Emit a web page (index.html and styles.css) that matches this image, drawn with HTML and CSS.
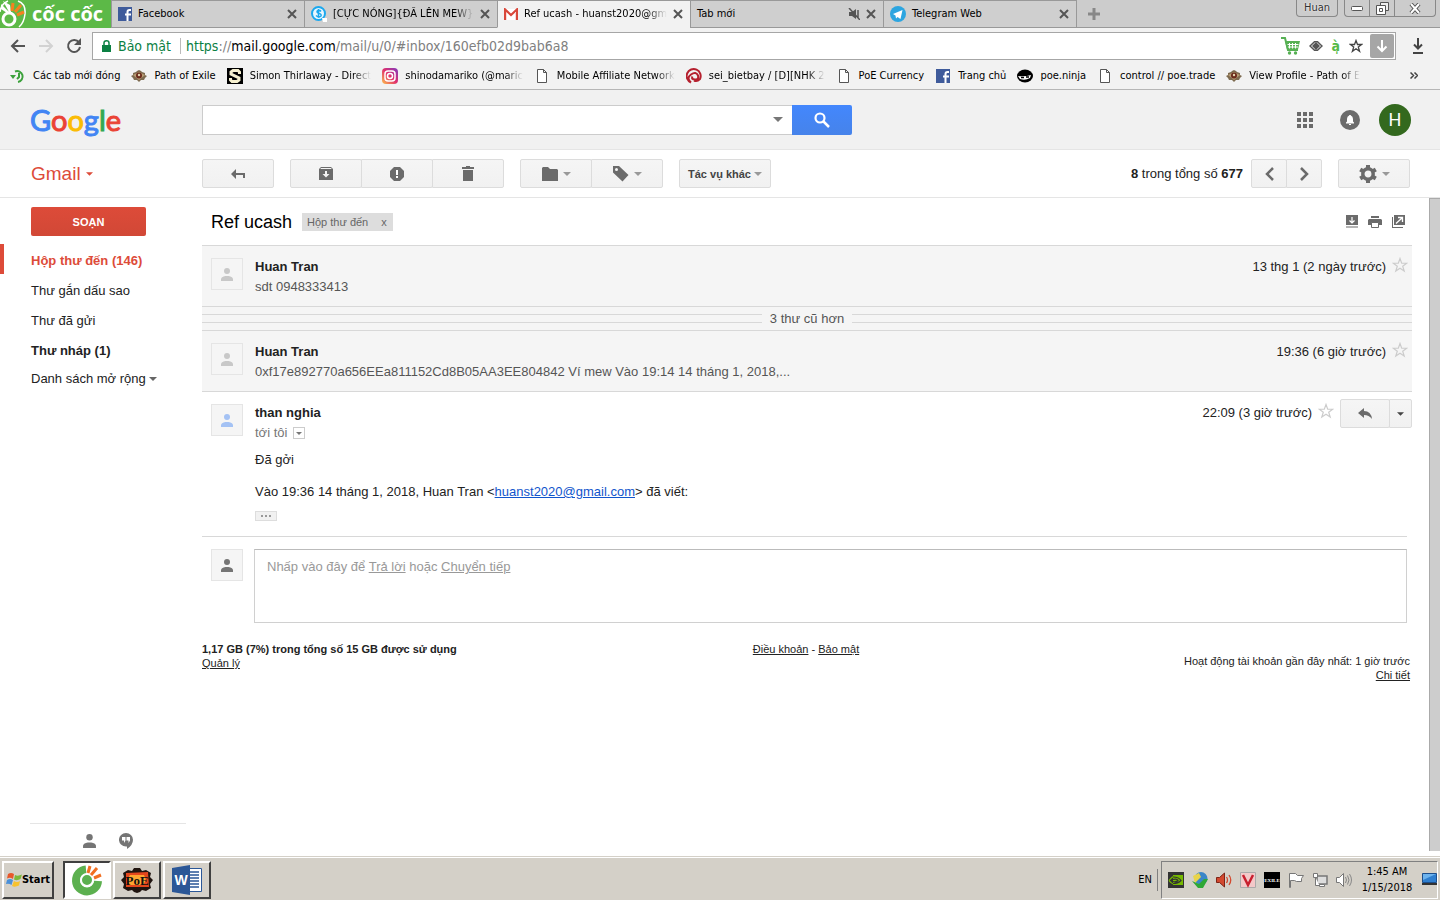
FILE: index.html
```
<!DOCTYPE html>
<html lang="vi">

<head>
    <meta charset="UTF-8">
    <meta name="viewport" content="width=device-width,initial-scale=1.0">
    <title>Ref ucash - huanst2020@gmail.com - Gmail</title>
    <link rel="stylesheet" href="styles.css">
</head>
<body>
    <!-- shared icons -->
    <svg class="defs" width="0" height="0">
        <symbol id="close" viewBox="0 0 10 10"><path d="M1 1l8 8M9 1l-8 8" stroke="#555" stroke-width="2"/></symbol>
        <symbol id="fb" viewBox="0 0 14 14"><path fill="#3f5b9b" d="M0 0h14v14H0z"/><path fill="none" stroke="#fff" stroke-width="2" d="M13 3h-1.500q-2 0-2 2V14M7 7.500h6"/></symbol>
        <symbol id="page" viewBox="0 0 12 14"><path fill="#fff" stroke="#555" d="M1.500.5h6l3 3v10h-9zM7.500.5v3h3"/></symbol>
        <symbol id="poe" viewBox="0 0 16 12"><path fill="#7d6a4f" d="M0 6l2-1 0-2 3-1 1-1 2-1 2 1 1 1 3 1 0 2 2 1-2 2-1 2-3 0-2 2-2-2-3 0-1-2z"/><path fill="#b89c74" d="M2 5l6-3 6 3-6 5z"/><circle cx="8" cy="5.500" r="3" fill="#6b2b1c"/><circle cx="8" cy="5" r="1.200" fill="#e4d4b0"/></symbol>
        <symbol id="down" viewBox="0 0 8 4"><path fill="currentColor" d="M0 0h8L4 4z"/></symbol>
        <symbol id="person" viewBox="0 0 12 13"><circle cx="6" cy="3" r="3" fill="currentColor"/><path fill="currentColor" d="M0 13v-2.500C1 8.500 4 8 6 8s5 .5 6 2.500V13z"/></symbol>
        <symbol id="star" viewBox="0 0 16 16"><path fill="none" stroke="currentColor" stroke-width="1.200" d="M8 1.500l1.700 4.600 5 .1-4 3 1.500 4.900L8 11.200l-4.200 2.900 1.500-4.900-4-3 5-.1z"/></symbol>
    </svg>

    <header class="browser">
        <div class="tabstrip">
            <div class="brand">
                <svg width="26" height="28" viewBox="0 0 26 28"><path fill="none" stroke="#fff" stroke-width="1.500" d="M18 1q8 3 7 13-1 9-6 13M0 12Q1 4 8 1"/><circle cx="9" cy="19" r="6" fill="none" stroke="#fff" stroke-width="3"/><path fill="#fff" d="M1 4l8 8-2 1-6-4zM3 1l7 4 1 7-2 0z"/><path stroke="#f58220" stroke-width="3" d="M13 3l-1 8M24 12l-7 3"/><path stroke="#f58220" stroke-width="3" d="M21 5l-6 7"/></svg>
                <span>cốc cốc</span>
            </div>
            <div class="tab"><svg class="fav" width="14" height="14"><use href="#fb"/></svg><span class="tab-title">Facebook</span><button class="x" aria-label="Đóng"><svg width="10" height="10"><use href="#close"/></svg></button></div>
            <div class="tab">
                <svg class="fav" width="16" height="16" viewBox="0 0 16 16"><circle cx="7.500" cy="7.500" r="6.500" fill="#e8f7ff" stroke="#1ba8ee" stroke-width="2"/><path fill="none" stroke="#1ba8ee" stroke-width="1.500" d="M10 5.500q-1-1.500-3-1-2 1 0 2.500 4 1 3 3-2 2-5-.5M7.500 3v9"/><path fill="#fff" d="M11 12h5v4h-4z"/></svg>
                <span class="tab-title fade">[CỰC NÓNG]{ĐÃ LÊN MEW}</span><button class="x" aria-label="Đóng"><svg width="10" height="10"><use href="#close"/></svg></button>
            </div>
            <div class="tab active">
                <svg class="fav" width="14" height="12" viewBox="0 0 14 12"><path fill="#fff" d="M1 1h12v11H1z"/><path fill="none" stroke="#d9483b" stroke-width="2.200" d="M1.100 12V1.500L7 7l5.900-5.500V12"/></svg>
                <span class="tab-title fade">Ref ucash - huanst2020@gm</span><button class="x" aria-label="Đóng"><svg width="10" height="10"><use href="#close"/></svg></button>
            </div>
            <div class="tab">
                <span class="tab-title">Tab mới</span>
                <svg width="12" height="12" viewBox="0 0 12 12"><path fill="#555" d="M1 4h3l4-3v10L4 8H1z"/><path d="M10 2v8M1 0l11 12" stroke="#555" stroke-width="1.500"/></svg>
                <button class="x" aria-label="Đóng"><svg width="10" height="10"><use href="#close"/></svg></button>
            </div>
            <div class="tab">
                <svg class="fav" width="16" height="16" viewBox="0 0 16 16"><circle cx="8" cy="8" r="8" fill="#2ca5e0"/><path fill="#fff" d="M3 8l9.500-4-2 9-3-2-1.500 1.500-.5-3z"/></svg>
                <span class="tab-title">Telegram Web</span><button class="x" aria-label="Đóng"><svg width="10" height="10"><use href="#close"/></svg></button>
            </div>
            <button class="newtab" aria-label="Tab mới"><svg width="14" height="14" viewBox="0 0 14 14"><path d="M7 1v12M1 7h12" stroke="#888" stroke-width="3"/></svg></button>
            <div class="window-buttons">
                <button class="user">Huan</button>
                <div class="win-group">
                    <button aria-label="Thu nhỏ"><svg width="12" height="5" viewBox="0 0 12 5"><rect x=".5" y=".5" width="11" height="4" rx="1" fill="#fff" stroke="#555"/></svg></button>
                    <button aria-label="Khôi phục"><svg width="13" height="13" viewBox="0 0 13 13"><path fill="#eee" stroke="#555" d="M4.500.5h8v8h-8z"/><path fill="#fff" stroke="#555" d="M.5 3.500h9v9h-9zM3.500 6.500h3v3h-3z"/></svg></button>
                    <button class="win-close" aria-label="Đóng cửa sổ"><svg width="12" height="11" viewBox="0 0 12 11"><path d="M2 1l8 9M10 1L2 10" stroke="#555" stroke-width="4"/><path d="M2 1l8 9M10 1L2 10" stroke="#fff" stroke-width="2"/></svg></button>
                </div>
            </div>
        </div>

        <div class="navbar">
            <button aria-label="Quay lại"><svg width="16" height="14" viewBox="0 0 16 14"><path fill="none" stroke="#555" stroke-width="2" d="M15 7H2M8 1L2 7l6 6"/></svg></button>
            <button aria-label="Tiến"><svg width="16" height="14" viewBox="0 0 16 14"><path fill="none" stroke="#d2d2d2" stroke-width="2" d="M1 7h13M8 1l6 6-6 6"/></svg></button>
            <button aria-label="Tải lại"><svg width="16" height="16" viewBox="0 0 16 16"><path fill="none" stroke="#555" stroke-width="2" d="M13 4.500A6 6 0 1 0 14 9"/><path fill="#555" d="M15 0v7H8z"/></svg></button>
            <div class="omnibox">
                <svg width="9" height="12" viewBox="0 0 9 12"><path fill="#0b8043" d="M0 5h9v7H0z"/><path fill="none" stroke="#0b8043" stroke-width="1.500" d="M2 5V3q0-2.200 2.500-2.200T7 3v2"/></svg>
                <span class="secure">Bảo mật</span>
                <span class="url"><span class="scheme">https</span>://<b>mail.google.com</b>/mail/u/0/#inbox/160efb02d9bab6a8</span>
                <div class="page-actions">
                    <svg width="19" height="18" viewBox="0 0 19 18"><path fill="none" stroke="#56b053" stroke-width="2" d="M0 1h4l3 12h10"/><path fill="#56b053" d="M4 4h15l-2 8.500H6z"/><path stroke="#fff" d="M8.500 6v5.500M11.500 6v5.500M14.500 6v5.500M6.500 7.500h11M7 10h10"/><circle cx="8.500" cy="16" r="1.700" fill="#56b053"/><circle cx="14.500" cy="16" r="1.700" fill="#56b053"/></svg>
                    <svg width="14" height="10" viewBox="0 0 14 10"><path fill="none" stroke="#555" stroke-width="1.500" d="M1 5l4.500-4.200h3L13 5 8.500 9.200h-3z"/><path fill="#555" d="M7 1l4 4-4 4-4-4z"/></svg>
                    <span class="spell">à̩</span>
                    <svg width="14" height="14" viewBox="0 0 14 14"><path fill="none" stroke="#444" stroke-width="1.300" d="M7 1.500l1.500 4h4.200L9.300 8l1.300 4.300L7 9.800l-3.600 2.500L4.700 8 1.300 5.500h4.200z"/></svg>
                </div>
                <button class="save" aria-label="Tải xuống"><svg width="12" height="14" viewBox="0 0 12 14"><path fill="none" stroke="#fff" stroke-width="2" d="M6 1v11M1.500 7.500L6 12l4.500-4.500"/></svg></button>
            </div>
            <button class="downloads" aria-label="Tệp đã tải"><svg width="12" height="16" viewBox="0 0 12 16"><path fill="none" stroke="#444" stroke-width="2" d="M6 0v10M2 6.500l4 4 4-4M1 15h10"/></svg></button>
        </div>

        <nav class="bookmarks">
            <a href="#"><svg width="16" height="14" viewBox="0 0 16 14"><path fill="none" stroke="#3ba13b" stroke-width="2" d="M5 2.500A5.500 5.500 0 1 1 8 13M9 4v4l-2 2"/><path fill="#3ba13b" d="M0 6h6L3 10z"/></svg><span>Các tab mới đóng</span></a>
            <a href="#"><svg width="16" height="12"><use href="#poe"/></svg><span>Path of Exile</span></a>
            <a href="#"><svg width="16" height="16" viewBox="0 0 16 16"><path d="M0 0h16v16H0z"/><path fill="none" stroke="#f6f0cf" stroke-width="3" d="M12.500 6V4L11 2.500H6L4 4v2l8 4v2l-2 1.500H5L3.500 12v-2"/></svg><span class="fade">Simon Thirlaway - Direct</span></a>
            <a href="#"><svg width="16" height="16" viewBox="0 0 16 16"><defs><linearGradient id="insta" x1="0" y1="1" x2="1" y2="0"><stop offset="0" stop-color="#fdc14b"/><stop offset=".5" stop-color="#e1306c"/><stop offset="1" stop-color="#7d3ac1"/></linearGradient></defs><rect width="16" height="16" rx="4" fill="url(#insta)"/><rect x="3" y="3" width="10" height="10" rx="3" fill="none" stroke="#fff" stroke-width="1.500"/><circle cx="8" cy="8" r="2.500" fill="none" stroke="#fff" stroke-width="1.500"/></svg><span class="fade">shinodamariko (@maric</span></a>
            <a href="#"><svg width="16" height="14"><use href="#page"/></svg><span class="fade">Mobile Affiliate Network</span></a>
            <a href="#"><svg width="16" height="16" viewBox="0 0 16 16"><path fill="none" stroke="#b5202e" stroke-width="2" d="M5 14.500A7 7 0 1 1 14 11q-3 3-6 1.500M5 14.500Q0 10 5 6.500t7 1q1 4-3 4t-2.500-3"/></svg><span class="fade">sei_bietbay / [D][NHK 2</span></a>
            <a href="#"><svg width="16" height="14"><use href="#page"/></svg><span>PoE Currency</span></a>
            <a href="#"><svg width="16" height="14"><use href="#fb"/></svg><span>Trang chủ</span></a>
            <a href="#"><svg width="16" height="14" viewBox="0 0 16 14"><ellipse cx="8" cy="7" rx="8" ry="6.500"/><path fill="#fff" d="M1 7q7 1 13-1l-1 3q-5 3-10 1z"/><path d="M4 8.500h3M9 8h3" stroke="#000" stroke-width="1.500"/></svg><span>poe.ninja</span></a>
            <a href="#"><svg width="16" height="14"><use href="#page"/></svg><span>control // poe.trade</span></a>
            <a href="#"><svg width="16" height="12"><use href="#poe"/></svg><span class="fade">View Profile - Path of E</span></a>
            <button class="more" aria-label="Thêm"><svg width="8" height="7" viewBox="0 0 8 7"><path fill="none" stroke="#444" stroke-width="1.500" d="M.5.5l3 3-3 3M4.500.5l3 3-3 3"/></svg></button>
        </nav>
    </header>

    <div class="gbar">
        <a class="logo" href="#" aria-label="Google"><span class="c-blue">G</span><span class="c-red">o</span><span class="c-yellow">o</span><span class="c-blue">g</span><span class="c-green">l</span><span class="c-red">e</span></a>
        <form class="search" action="">
            <input type="text" aria-label="Tìm kiếm" autocomplete="off">
            <button type="button" class="options" aria-label="Tùy chọn tìm kiếm"><svg width="10" height="5"><use href="#down"/></svg></button>
            <button class="go" aria-label="Tìm"><svg width="16" height="16" viewBox="0 0 16 16"><circle cx="6" cy="6" r="4.500" fill="none" stroke="#fff" stroke-width="2.200"/><path d="M9 9l6 6" stroke="#fff" stroke-width="2.500"/></svg></button>
        </form>
        <div class="account">
            <button aria-label="Ứng dụng"><svg width="16" height="16" viewBox="0 0 16 16"><path fill="#6b6b6b" d="M0 0h4v4H0zM6 0h4v4H6zM12 0h4v4h-4zM0 6h4v4H0zM6 6h4v4H6zM12 6h4v4h-4zM0 12h4v4H0zM6 12h4v4H6zM12 12h4v4h-4z"/></svg></button>
            <button aria-label="Thông báo"><svg width="20" height="20" viewBox="0 0 20 20"><circle cx="10" cy="10" r="10" fill="#6b6b6b"/><path fill="#fff" d="M6 13.500v-1l1-1V9q0-3 2.200-3.500V5h1.600v.5Q13 6 13 9v2.500l1 1v1zM9 14h2v1H9z"/></svg></button>
            <button class="me">H</button>
        </div>
    </div>

    <div class="toolbar">
        <button class="gmail">Gmail <svg width="7" height="4"><use href="#down"/></svg></button>
        <div class="group">
            <button class="btn" aria-label="Quay lại"><svg width="14" height="10" viewBox="0 0 14 10"><path fill="#6b6b6b" d="M0 5l5-5v4h9v5h-2V6H5v4z"/></svg></button>
        </div>
        <div class="group">
            <button class="btn" aria-label="Lưu trữ"><svg width="14" height="13" viewBox="0 0 14 13"><path fill="#6b6b6b" fill-rule="evenodd" d="M2 0h10l2 2v11H0V2zM2 1l-.7 1h11.400L12 1zM6 4v3H3.500L7 10.500 10.500 7H8V4z"/></svg></button>
            <button class="btn" aria-label="Báo cáo spam"><svg width="14" height="14" viewBox="0 0 14 14"><path fill="#6b6b6b" d="M4 0h6l4 4v6l-4 4H4l-4-4V4z"/><path fill="#fff" d="M6 3h2v5H6zM6 9h2v2H6z"/></svg></button>
            <button class="btn" aria-label="Xóa"><svg width="12" height="15" viewBox="0 0 12 15"><path fill="#6b6b6b" d="M0 1h4V0h4v1h4v2H0zM1 4h10v11H1z"/></svg></button>
        </div>
        <div class="group">
            <button class="btn" aria-label="Chuyển tới"><svg width="16" height="14" viewBox="0 0 16 14"><path fill="#6b6b6b" d="M0 1l1-1h5l2 2h7l1 1v11H0z"/></svg><svg class="caret" width="8" height="4"><use href="#down"/></svg></button>
            <button class="btn" aria-label="Nhãn"><svg width="16" height="16" viewBox="0 0 16 16"><path fill="#6b6b6b" fill-rule="evenodd" d="M0 0h6l9.500 9-6 6.500L0 6.500zM2 3.500a1.500 1.500 0 1 0 3 0 1.500 1.500 0 1 0-3 0"/></svg><svg class="caret" width="8" height="4"><use href="#down"/></svg></button>
        </div>
        <button class="btn other">Tác vụ khác<svg class="caret" width="8" height="4"><use href="#down"/></svg></button>
        <div class="count"><b>8</b> trong tổng số <b>677</b></div>
        <div class="group pager">
            <button class="btn" aria-label="Mới hơn"><svg width="9" height="14" viewBox="0 0 9 14"><path fill="none" stroke="#6b6b6b" stroke-width="2.500" d="M8 1L2 7l6 6"/></svg></button>
            <button class="btn" aria-label="Cũ hơn"><svg width="9" height="14" viewBox="0 0 9 14"><path fill="none" stroke="#6b6b6b" stroke-width="2.500" d="M1 1l6 6-6 6"/></svg></button>
        </div>
        <button class="btn" aria-label="Cài đặt"><svg width="18" height="18" viewBox="0 0 18 18"><circle cx="9" cy="9" r="5.200" fill="none" stroke="#6b6b6b" stroke-width="3.500"/><path stroke="#6b6b6b" stroke-width="4" d="M9 0v4M9 14v4M1.200 4.500l3.500 2M13.300 11.500l3.500 2M1.200 13.500l3.500-2M13.300 6.500l3.500-2"/></svg><svg class="caret" width="8" height="4"><use href="#down"/></svg></button>
    </div>

    <div class="page">
        <aside>
            <button class="compose">SOẠN</button>
            <ul class="labels">
                <li class="current"><a href="#">Hộp thư đến (146)</a></li>
                <li><a href="#">Thư gắn dấu sao</a></li>
                <li><a href="#">Thư đã gửi</a></li>
                <li class="unread"><a href="#">Thư nháp (1)</a></li>
                <li class="expand"><a href="#">Danh sách mở rộng</a><svg width="8" height="4"><use href="#down"/></svg></li>
            </ul>
            <div class="chat">
                <button aria-label="Danh bạ"><svg width="13" height="14"><use href="#person"/></svg></button>
                <button aria-label="Hangouts"><svg width="14" height="16" viewBox="0 0 14 16"><path fill="#757575" d="M7 0a7 6.700 0 0 1 7 6.700Q14 12 8 16v-2.500H7A7 6.700 0 0 1 7 0z"/><path fill="#fff" d="M3 4h3.500v3.500L5 10V7.500H3zM7.500 4H11v3.500L9.500 10V7.500h-2z"/></svg></button>
            </div>
        </aside>

        <main>
            <div class="subject">
                <h1>Ref ucash</h1>
                <span class="chip">Hộp thư đến <button aria-label="Xóa nhãn">x</button></span>
                <div class="tools">
                    <button aria-label="Lưu"><svg width="12" height="13" viewBox="0 0 12 13"><path fill="#6b6b6b" d="M0 0h12v10H0zM0 11.500h12v1H0z"/><path fill="none" stroke="#fff" stroke-width="1.200" d="M6 2v6M3.500 5.500L6 8l2.500-2.500"/></svg></button>
                    <button aria-label="In"><svg width="14" height="12" viewBox="0 0 14 12"><path fill="#6b6b6b" d="M3 0h8v2H3zM1 3h12l1 1v5h-3V7H3v2H0V4z"/><path fill="#fff" stroke="#6b6b6b" d="M3.500 6.500h7v5h-7z"/></svg></button>
                    <button aria-label="Mở cửa sổ mới"><svg width="13" height="13" viewBox="0 0 13 13"><path fill="#6b6b6b" d="M2 0h11v10H2zM0 2h1v10h10v1H0z"/><path fill="none" stroke="#fff" stroke-width="1.300" d="M4 8.500L10 3M6 2.500h4.500V7"/></svg></button>
                </div>
            </div>

            <section class="msg folded">
                <div class="avatar"><svg width="12" height="13"><use href="#person"/></svg></div>
                <div class="text"><b>Huan Tran</b><p class="snippet">sdt 0948333413</p></div>
                <div class="date">13 thg 1 (2 ngày trước) <svg width="16" height="16"><use href="#star"/></svg></div>
            </section>
            <button class="older"><span>3 thư cũ hơn</span></button>
            <section class="msg folded">
                <div class="avatar"><svg width="12" height="13"><use href="#person"/></svg></div>
                <div class="text"><b>Huan Tran</b><p class="snippet">0xf17e892770a656EEa811152Cd8B05AA3EE804842 Ví mew Vào 19:14 14 tháng 1, 2018,...</p></div>
                <div class="date">19:36 (6 giờ trước) <svg width="16" height="16"><use href="#star"/></svg></div>
            </section>
            <section class="msg open">
                <div class="avatar blue"><svg width="12" height="13"><use href="#person"/></svg></div>
                <div class="text">
                    <b>than nghia</b>
                    <p class="to">tới tôi <button aria-label="Chi tiết"><svg width="6" height="3"><use href="#down"/></svg></button></p>
                    <div class="body">
                        <p>Đã gởi</p>
                        <p>Vào 19:36 14 tháng 1, 2018, Huan Tran &lt;<a href="#">huanst2020@gmail.com</a>&gt; đã viết:</p>
                        <button class="trimmed" aria-label="Hiển thị nội dung bị cắt"><svg width="10" height="2" viewBox="0 0 10 2"><path fill="#999" d="M0 0h2v2H0zM4 0h2v2H4zM8 0h2v2H8z"/></svg></button>
                    </div>
                </div>
                <div class="date">22:09 (3 giờ trước) <svg width="16" height="16"><use href="#star"/></svg></div>
                <div class="group reply-btns">
                    <button class="btn" aria-label="Trả lời"><svg width="14" height="11" viewBox="0 0 14 11"><path fill="#6b6b6b" d="M0 5l6-5v3q7 0 8 8-3-4-8-4v3z"/></svg></button>
                    <button class="btn" aria-label="Khác"><svg width="7" height="4"><use href="#down"/></svg></button>
                </div>
            </section>

            <section class="reply">
                <div class="avatar dark"><svg width="12" height="13"><use href="#person"/></svg></div>
                <div class="reply-box">Nhấp vào đây để <a href="#">Trả lời</a> hoặc <a href="#">Chuyển tiếp</a></div>
            </section>

            <footer>
                <div><b>1,17 GB (7%) trong tổng số 15 GB được sử dụng</b><br><a href="#">Quản lý</a></div>
                <div class="terms"><a href="#">Điều khoản</a> - <a href="#">Bảo mật</a></div>
                <div class="activity">Hoạt động tài khoản gần đây nhất: 1 giờ trước<br><a href="#">Chi tiết</a></div>
            </footer>
        </main>
        <div class="scrollbar"></div>
    </div>

    <div class="taskbar">
        <button class="task start"><svg width="16" height="15" viewBox="0 0 16 15"><path fill="#e8572a" d="M2 2q3-2 6 0L7 7Q4 5 1 6.500z"/><path fill="#7cb83b" d="M9 3q3 1.500 7-.5L14.500 7Q11 9 8 7.500z"/><path fill="#4a90d9" d="M1 8q3-2 6 0l-1.500 5Q3 11 0 12z"/><path fill="#f7c22d" d="M8 9q3 2 6 0l-1 4.500q-4 2-7 .5z"/></svg>Start</button>
        <button class="task pressed" aria-label="Cốc Cốc"><svg width="32" height="32" viewBox="0 0 32 32"><path fill="none" stroke="#5cb04f" stroke-width="8" d="M15 5.500A11 11 0 1 0 27 17"/><circle cx="16" cy="16" r="6" fill="#5cb04f" stroke="#fff" stroke-width="2"/><path stroke="#f26f21" stroke-width="3" d="M19 2l-2 7M26 4l-6 7M30 11l-7 3"/></svg></button>
        <button class="task" aria-label="Path of Exile"><svg width="32" height="26" viewBox="0 0 32 26"><path fill="#20140f" d="M0 13l3-3-1-4 5-3 4 1 2-3h6l2 3 4-1 5 3-1 4 3 3-3 4 1 4-5 3-4-1-2 2-3 1-3-1-2-2-4 1-5-3 1-4z"/><path fill="#e4471d" d="M5 6l22-1 1 15-23 0z"/><path fill="#ffa630" d="M9 8h14l2 5-3 5H9l-3-5z"/><text x="16" y="18" text-anchor="middle" class="poe-text">PoE</text></svg></button>
        <button class="task" aria-label="Word"><svg width="32" height="32" viewBox="0 0 32 32"><path fill="#fff" stroke="#2b5797" d="M15.500 4.500h15v23h-15z"/><path stroke="#2b5797" stroke-width="1.500" d="M18 8h10M18 11h10M18 14h10M18 17h10M18 20h10M18 23h10"/><path fill="#2b5797" d="M1 4l18-3v30L1 28z"/><text x="10" y="21" text-anchor="middle" class="word-text">W</text></svg></button>
        <span class="lang">EN</span>
        <div class="tray">
            <svg width="16" height="16" viewBox="0 0 16 16"><path fill="#333" d="M0 0h16v16H0z"/><path fill="#76b900" d="M5 3h10v10H5z"/><path fill="none" stroke="#76b900" stroke-width="1.200" d="M1 8.500q4-5 6-4M1 8.500q3 4 6 3.500"/><path fill="none" stroke="#333" stroke-width="1.200" d="M5 5q6 0 8 3.500-3 3-8 3M5 7.500q4-1 5 1-2 2-5 1"/></svg>
            <svg width="16" height="16" viewBox="0 0 16 16"><circle cx="9" cy="6.500" r="6.500" fill="#3a86c8"/><path fill="#e9d44a" d="M1 4l6-3 2 4-6 6z"/><path fill="#2ea836" d="M0 9l7 3 5-5h4l-5 9H6z"/></svg>
            <svg width="16" height="16" viewBox="0 0 16 16"><path fill="#d3492f" stroke="#7d2417" d="M.5 5.500h3l5-4.500v14l-5-4.500h-3z"/><path fill="none" stroke="#d3492f" stroke-width="1.300" d="M10.500 5q2 3 0 6M13 3q3.500 5 0 10"/></svg>
            <svg width="16" height="16" viewBox="0 0 16 16"><path fill="#f3c9c9" stroke="#aaa" d="M.5.5h15v15H.5z"/><path fill="none" stroke="#c8202f" stroke-width="2.500" d="M3 3l5 10 5-10"/></svg>
            <svg width="16" height="16" viewBox="0 0 16 16"><path d="M0 0h16v16H0z"/><text x="8" y="10" text-anchor="middle" class="exile-text">EXILE</text></svg>
            <svg width="16" height="16" viewBox="0 0 16 16"><path fill="#fff" stroke="#777" d="M1.500 15.500V1.500h6l2 2h6l-2 3 0 3h-5l-2-1h-4v7z"/></svg>
            <svg width="16" height="16" viewBox="0 0 16 16"><path fill="#ddd" stroke="#777" stroke-width="1.500" d="M5 4h10v8H5z"/><path fill="#fff" stroke="#777" d="M7.500 12.500h5v2h-5zM1.500 1.500h4v4h-4zM3.500 5.500v8h4"/></svg>
            <svg width="16" height="16" viewBox="0 0 16 16"><path fill="#fff" stroke="#777" d="M.5 5.500h3l4-4v13l-4-4h-3z"/><path fill="none" stroke="#888" d="M9.500 5q2 3 0 6M11.500 3.500q3 4.500 0 9M13.500 2q4 6 0 12"/></svg>
            <div class="clock">1:45 AM<br>1/15/2018</div>
            <svg width="15" height="13" viewBox="0 0 15 13"><path fill="#2f7fd0" stroke="#1d4f8c" d="M.5.5h14v9H.5z"/><path fill="#6db3ee" d="M1 1h13L1 7z"/><path fill="#333" d="M0 10h15v2H0z"/></svg>
        </div>
    </div>
</body>
</html>
```
FILE: styles.css
```
* { box-sizing: border-box; }
body { margin: 0; min-height: 100vh; display: flex; flex-direction: column; font: 13px/20px "Liberation Sans", Arial, sans-serif; color: #222; background: #fff; }
button { font: inherit; color: inherit; background: none; border: none; padding: 0; display: flex; align-items: center; justify-content: center; }
svg { flex: none; display: block; }
p, h1, ul { margin: 0; padding: 0; }
.defs { position: absolute; }

/* browser window */
.browser { background: #f2f2f2; border-bottom: 1px solid #b6b6b6; font: 11px/16px "DejaVu Sans Condensed", "Liberation Sans", sans-serif; color: #000; }
.tabstrip { display: flex; height: 28px; background: #ccc; box-shadow: inset 0 -1px #999; }
.brand { width: 111px; flex: none; display: flex; align-items: center; gap: 6px; background: #5cb947; color: #fff; font: bold 20px/28px "Open Sans", sans-serif; white-space: nowrap; }
.tab { flex: 0 1 193px; min-width: 0; display: flex; align-items: center; padding: 0 7px 0 6px; gap: 6px; background: #cfcfcf; border: solid #999; border-width: 1px 0 1px 1px; }
.tab.active { background: #f2f2f2; border-bottom-color: #f2f2f2; }
.tab-title { flex: 1; white-space: nowrap; }
.tab-title.fade { -webkit-mask-image: linear-gradient(to left, transparent, #000 20px); mask-image: linear-gradient(to left, transparent, #000 20px); }
.newtab { padding: 0 10px; border-left: 1px solid #999; }
.window-buttons { margin-left: auto; padding-right: 4px; display: flex; align-items: flex-start; gap: 6px; }
.window-buttons button { height: 17px; border: 1px solid #888; border-top: none; }
.user { width: 42px; border-radius: 0 0 4px 4px; color: #333; text-shadow: 0 0 2px #fff; }
.win-group { display: flex; }
.win-group button { width: 25px; border-right: none; }
.win-group button:first-child { border-radius: 0 0 0 4px; }
.win-group .win-close { width: 42px; border-right: 1px solid #888; border-radius: 0 0 4px 0; }

.navbar { display: flex; align-items: center; gap: 12px; padding: 4px 16px 2px 10px; }
.omnibox { flex: 1; min-width: 0; height: 28px; margin-left: -2px; padding: 0 1px 0 9px; display: flex; align-items: center; gap: 7px; background: #fff; border: 1px solid #a6a6a6; font-size: 14px; }
.secure { color: #0b8043; padding-right: 9px; border-right: 1px solid #bbb; }
.url { flex: 1; white-space: nowrap; color: #808080; margin-left: -2px; }
.url b { font-weight: normal; color: #000; }
.url .scheme { color: #0b8043; }
.page-actions { display: flex; align-items: center; gap: 9px; }
.spell { color: #56b947; font-weight: bold; }
.save { width: 24px; height: 24px; background: #a6a6a6; border-radius: 2px; }
.downloads { margin-left: 4px; }

.bookmarks { display: flex; align-items: center; gap: 11px; height: 27px; padding: 0 22px 0 10px; }
.bookmarks a { display: flex; align-items: center; gap: 7px; color: #000; text-decoration: none; white-space: nowrap; }
.bookmarks .fade { -webkit-mask-image: linear-gradient(to left, transparent, #000 18px); mask-image: linear-gradient(to left, transparent, #000 18px); }
.more { margin-left: auto; }

/* google bar */
.gbar { display: flex; align-items: center; height: 60px; padding: 0 29px 0 30px; background: #f1f1f1; border-bottom: 1px solid #e5e5e5; }
.logo { width: 172px; font: 29px/44px Lato, sans-serif; text-decoration: none; -webkit-text-stroke: 1px; }
.c-blue { color: #4285f4; }
.c-red { color: #ea4335; }
.c-yellow { color: #fbbc05; }
.c-green { color: #34a853; }
.search { flex: 0 1 650px; height: 30px; display: flex; }
.search input { flex: 1; min-width: 0; border: 1px solid #ccc; border-right: none; background: #fff; padding: 0 8px; font: inherit; }
.search .options { width: 28px; background: #fff; border: solid #ccc; border-width: 1px 0; color: #777; }
.search .go { width: 60px; background: linear-gradient(#4387fd, #4683ea); border-radius: 0 2px 2px 0; }
.account { margin-left: auto; display: flex; align-items: center; gap: 27px; }
.me { width: 32px; height: 32px; margin-left: -8px; border-radius: 50%; background: #33691e; color: #fff; font: 18px/32px Roboto, sans-serif; }

/* gmail toolbar */
.toolbar { display: flex; align-items: center; gap: 16px; height: 48px; padding: 0 30px; border-bottom: 1px solid #e5e5e5; }
.gmail { width: 156px; justify-content: flex-start; gap: 5px; padding-left: 1px; color: #dd4b39; font-size: 19px; }
.group { display: flex; }
.btn { width: 72px; height: 29px; gap: 5px; background: linear-gradient(#f5f5f5, #f1f1f1); border: 1px solid #dcdcdc; border-radius: 2px; color: #444; }
.group .btn + .btn { margin-left: -1px; border-radius: 0 2px 2px 0; }
.caret { color: #999; }
.other { width: 92px; gap: 3px; font-size: 11px; font-weight: bold; white-space: nowrap; }
.count { margin: 0 -8px 0 auto; }
.pager .btn { width: 36px; }

/* sidebar */
.page { flex: 1; display: flex; }
aside { width: 202px; flex: none; display: flex; flex-direction: column; padding-top: 9px; }
.compose { width: 115px; height: 29px; margin: 0 0 8px 31px; border-radius: 2px; background: linear-gradient(#dd4b39, #d14836); color: #fff; font-size: 11px; font-weight: bold; }
.labels { list-style: none; }
.labels li { height: 30px; display: flex; align-items: center; padding: 4px 0 0 31px; color: #222; }
.labels a { color: inherit; text-decoration: none; }
.labels .current { border-left: 4px solid #dd4b39; padding-left: 27px; color: #dd4b39; font-weight: bold; }
.labels .unread { font-weight: bold; }
.labels .expand { height: 26px; gap: 3px; }
.labels .expand svg { color: #666; }
.chat { margin: auto 16px 0 30px; height: 33px; padding-top: 2px; display: flex; justify-content: center; gap: 23px; border-top: 1px solid #e5e5e5; color: #757575; }

/* conversation */
main { flex: 1; min-width: 0; padding-right: 17px; }
.subject { display: flex; align-items: center; height: 47px; padding: 0 7px 0 9px; }
h1 { font-size: 18px; font-weight: normal; color: #000; }
.chip { display: flex; align-items: center; gap: 13px; height: 18px; margin-left: 10px; padding: 0 6px 0 5px; background: #ddd; color: #666; font-size: 11px; }
.tools { margin-left: auto; display: flex; align-items: center; gap: 10px; }
.msg { display: flex; padding: 11px 0 9px; }
.folded { background: #f5f5f5; border: solid #d8d8d8; border-width: 1px 0; }
.avatar { width: 32px; height: 32px; flex: none; margin: 1px 12px 0 9px; display: flex; align-items: center; justify-content: center; background: #f5f5f5; border: 1px solid #e5e5e5; color: #c8c8c8; }
.avatar.blue { color: #a4c2f4; }
.avatar.dark { color: #757575; }
.text { flex: 1; min-width: 0; }
.snippet { color: #555; overflow: hidden; white-space: nowrap; }
.date { display: flex; gap: 6px; height: 20px; padding-right: 4px; white-space: nowrap; }
.date svg { color: #ccc; }
.older { width: 100%; height: 23px; color: #555; background: linear-gradient(#d8d8d8, #d8d8d8) 0 7px / 100% 1px no-repeat, linear-gradient(#d8d8d8, #d8d8d8) 0 15px / 100% 1px no-repeat, #f5f5f5; }
.older span { background: #f5f5f5; padding: 0 8px; }

.to { display: flex; align-items: center; gap: 6px; color: #777; }
.to button { width: 12px; height: 12px; border: 1px solid #ccc; }
.body { padding-top: 7px; }
.body p { margin-bottom: 12px; }
.body a { color: #15c; }
.trimmed { width: 22px; height: 10px; margin-top: -3px; background: #f1f1f1; border: 1px solid #ddd; }
.open { padding-bottom: 15px; }
.open .date { padding-right: 6px; }
.reply-btns { margin-top: -4px; height: 29px; }
.reply-btns .btn { width: 50px; }
.reply-btns .btn + .btn { width: 23px; }

.reply { display: flex; margin-right: 5px; padding-top: 12px; border-top: 1px solid #d8d8d8; }
.reply .avatar { margin: 0 11px 0 9px; }
.reply-box { flex: 1; height: 74px; padding: 7px 12px; border: 1px solid #d0d0d0; border-top-color: #bbb; color: #999; }
.reply-box a { color: inherit; }

footer { display: grid; grid-template-columns: 1fr auto 1fr; padding: 19px 2px 0 0; font-size: 11px; line-height: 14px; }
footer a { color: inherit; }
.activity { text-align: right; padding-top: 12px; }

.scrollbar { width: 11px; flex: none; margin-bottom: 5px; background: #cdcdcd; border-left: 1px solid #aaa; border-top: 1px solid #aaa; }

/* windows taskbar */
.taskbar { height: 44px; display: flex; align-items: center; gap: 2px; padding: 2px 2px 0; background: #d4d0c8; border-top: 1px solid #d4d0c8; box-shadow: inset 0 1px #fff; font: 11px/16px "DejaVu Sans Condensed", "Liberation Sans", sans-serif; color: #000; }
.task { width: 48px; height: 38px; border: 2px solid; border-color: #fff #404040 #404040 #fff; }
.task.start { width: 52px; margin-right: 7px; font-weight: bold; }
.task.pressed { background: #fff; border-color: #404040 #fff #fff #404040; }
.poe-text { font: bold 13px "Liberation Serif", serif; fill: #111; }
.word-text { font: bold 14px "Liberation Sans", sans-serif; fill: #fff; }
.exile-text { font: bold 5px "Liberation Serif", serif; fill: #fff; }
.lang { margin-left: auto; padding-right: 5px; border-right: 1px solid #808080; line-height: 22px; }
.tray { height: 38px; margin-left: 1px; padding: 0 0 0 6px; display: flex; align-items: center; gap: 8px; border: 1px solid; border-color: #808080 #fff #fff #808080; }
.clock { width: 54px; text-align: center; white-space: nowrap; }
```
